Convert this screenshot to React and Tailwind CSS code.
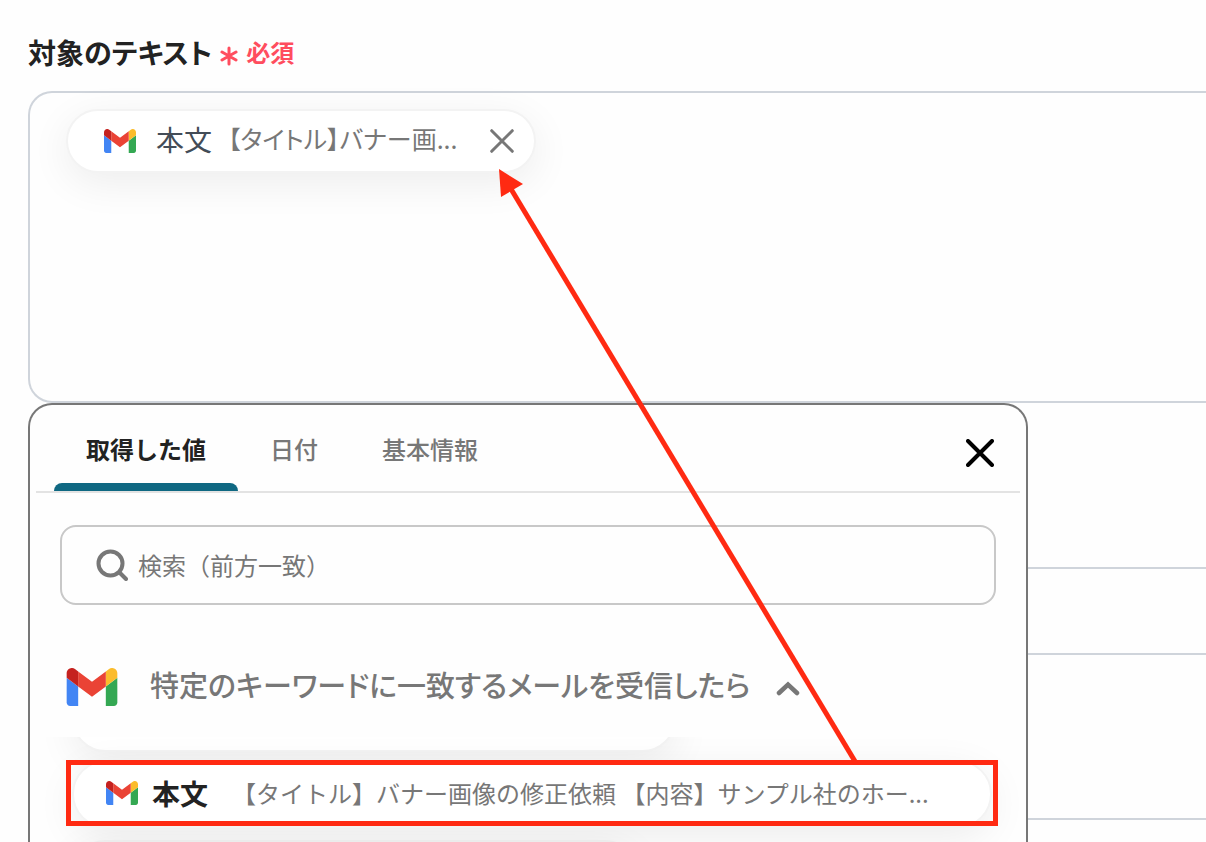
import React, { useState } from "react";

const tabs = ["取得した値", "日付", "基本情報"];

const GmailIcon = ({ className }) => (
  <svg viewBox="52 42 88 66" className={className} aria-hidden="true">
    <path fill="#4285f4" d="M58 108h14V74L52 59v43c0 3.32 2.69 6 6 6" />
    <path fill="#34a853" d="M120 108h14c3.32 0 6-2.69 6-6V59l-20 15" />
    <path fill="#fbbc2c" d="M120 48v26l20-15v-8c0-7.42-8.47-11.65-14.4-7.2" />
    <path fill="#ea4335" d="M72 74V48l24 18 24-18v26L96 92" />
    <path fill="#c5221f" d="M52 51v8l20 15V48l-5.6-4.2c-5.94-4.45-14.4-.22-14.4 7.2" />
  </svg>
);

const CloseIcon = ({ className }) => (
  <svg viewBox="0 0 28 28" fill="none" stroke="currentColor" strokeLinecap="round" className={className} aria-hidden="true">
    <path d="M2 2l24 24M26 2L2 26" />
  </svg>
);

const SelectedChip = ({ onRemove }) => (
  <div className="inline-flex h-16 items-center rounded-full border-2 border-[#f3f3f3] bg-white pr-5 pl-9 shadow-[0_10px_40px_rgba(0,0,0,0.07)] [font-feature-settings:'palt']">
    <GmailIcon className="h-6 w-8" />
    <span className="ml-5 pb-1 text-[28px] text-[#434c57]">本文</span>
    <span className="ml-4 pb-1 text-[25px] text-[#777777]">【タイトル】バナー画...</span>
    <button type="button" aria-label="削除" onClick={onRemove} className="ml-8 text-[#777777]">
      <CloseIcon className="size-6 stroke-[3.5]" />
    </button>
  </div>
);

const Arrow = () => (
  <svg
    viewBox="0 0 364 598"
    className="pointer-events-none absolute top-[169px] left-[499px] h-[598px] w-[364px]"
    aria-hidden="true"
  >
    <path d="M12 20L357 594" stroke="#ff2a12" strokeWidth="5" />
    <path d="M0 0L24 15L2 28Z" fill="#ff2a12" />
  </svg>
);

const ValuePicker = ({ onClose }) => {
  const [active, setActive] = useState(0);

  return (
    <section className="absolute top-full left-0 flex w-full max-w-[1000px] flex-col rounded-t-3xl border-2 border-b-0 border-[#777777] bg-[#fefefe]">
      <div className="mx-1.5 flex h-22 items-center border-b-2 border-[#e3e3e3] pr-6.5 pl-4.5">
        <div role="tablist" className="flex self-stretch">
          {tabs.map((tab, i) => (
            <button
              key={tab}
              type="button"
              role="tab"
              aria-selected={active === i}
              onClick={() => setActive(i)}
              className={`relative px-8 pt-0.5 text-2xl ${active === i ? "font-bold text-[#222222]" : "font-medium text-[#777777]"}`}
            >
              {tab}
              {active === i && <span className="absolute inset-x-0 bottom-0 h-2 rounded-t-lg bg-[#0f6882]" />}
            </button>
          ))}
        </div>
        <button type="button" aria-label="閉じる" onClick={onClose} className="mt-2.5 ml-auto text-black">
          <CloseIcon className="size-7 stroke-4" />
        </button>
      </div>

      <label className="mx-7.5 mt-8 flex h-20 items-center gap-2.5 rounded-2xl border-2 border-[#c8c8c8] pr-8 pl-8.5">
        <svg viewBox="0 0 32 32" fill="none" stroke="#777777" strokeWidth="4" strokeLinecap="round" className="size-8 shrink-0" aria-hidden="true">
          <circle cx="14.5" cy="14.5" r="12" />
          <path d="M23.5 23.5L30 30" />
        </svg>
        <input
          type="text"
          aria-label="検索"
          placeholder="検索（前方一致）"
          className="min-w-0 flex-1 text-2xl outline-none placeholder:text-[#777777]"
        />
      </label>

      <button type="button" className="mt-8 flex h-25 items-center pl-9 text-left">
        <GmailIcon className="h-[38px] w-[52px]" />
        <span className="ml-8 pb-1 text-[29px] font-medium text-[#777777] [font-feature-settings:'palt']">
          特定のキーワードに一致するメールを受信したら
        </span>
        <svg viewBox="0 0 24 16" fill="none" stroke="#777777" strokeWidth="4.5" strokeLinecap="round" className="mt-1 ml-6.5 h-4 w-6" aria-hidden="true">
          <path d="M3 12l9-8.5L21 12" />
        </svg>
      </button>

      <ul className="overflow-hidden pr-8.5 pl-10.5">
        <li className="-mt-13 h-[67px] w-[604px] rounded-full border-2 border-[#f3f3f3] bg-white shadow-[0_10px_40px_rgba(0,0,0,0.07)]" />
        <li className="relative mt-2 mb-3">
          <button
            type="button"
            className="flex h-[68px] w-full items-center rounded-full border-2 border-[#f3f3f3] bg-white pb-0.5 pl-8 text-left shadow-[0_10px_40px_rgba(0,0,0,0.07)]"
          >
            <GmailIcon className="h-6 w-8" />
            <span className="ml-3.5 text-[28px] font-bold text-[#222222]">本文</span>
            <span className="ml-6 text-2xl whitespace-nowrap text-[#777777]">
              【タイトル】バナー画像の修正依頼 【内容】サンプル社のホー...
            </span>
          </button>
          <span className="pointer-events-none absolute -inset-x-1.5 top-0 h-[66px] border-5 border-[#ff2a12]" />
        </li>
        <li className="h-[66px] w-[566px] rounded-full border-2 border-[#f3f3f3] bg-white shadow-[0_10px_40px_rgba(0,0,0,0.07)]" />
      </ul>
    </section>
  );
};

export default function App() {
  const [selected, setSelected] = useState(true);
  const [open, setOpen] = useState(true);

  return (
    <main className="relative h-screen overflow-hidden bg-[#fefefe] pt-8 pl-7 font-['Noto_Sans_CJK_JP','Noto_Sans',sans-serif]">
      <div className="flex h-[59px] items-start gap-2">
        <h2 id="target-text" className="text-[28px] leading-10 font-bold text-[#222222] [font-feature-settings:'palt']">
          対象のテキスト
        </h2>
        <span className="flex items-center gap-2 text-2xl leading-10 font-bold text-[#ff4d5e]">
          <svg viewBox="0 0 18 20" fill="none" stroke="currentColor" strokeWidth="3" strokeLinecap="round" className="mt-2 h-5 w-4.5" aria-hidden="true">
            <path d="M9 2v16M2 6l14 8M16 6L2 14" />
          </svg>
          必須
        </span>
      </div>

      <div className="relative">
        <div
          role="textbox"
          aria-labelledby="target-text"
          tabIndex={0}
          onClick={() => setOpen(true)}
          className="h-78 rounded-l-3xl border-2 border-r-0 border-[#cfd4db] pt-4 pl-9"
        >
          {selected && <SelectedChip onRemove={() => setSelected(false)} />}
        </div>
        {open && <ValuePicker onClose={() => setOpen(false)} />}
      </div>

      {/* form rows that continue behind the picker */}
      <div className="h-[164px]" />
      <div className="h-22 border-y-2 border-[#cfd4db]" />
      <div className="h-[165px] border-b-2 border-[#cfd4db]" />

      {selected && open && <Arrow />}
    </main>
  );
}
